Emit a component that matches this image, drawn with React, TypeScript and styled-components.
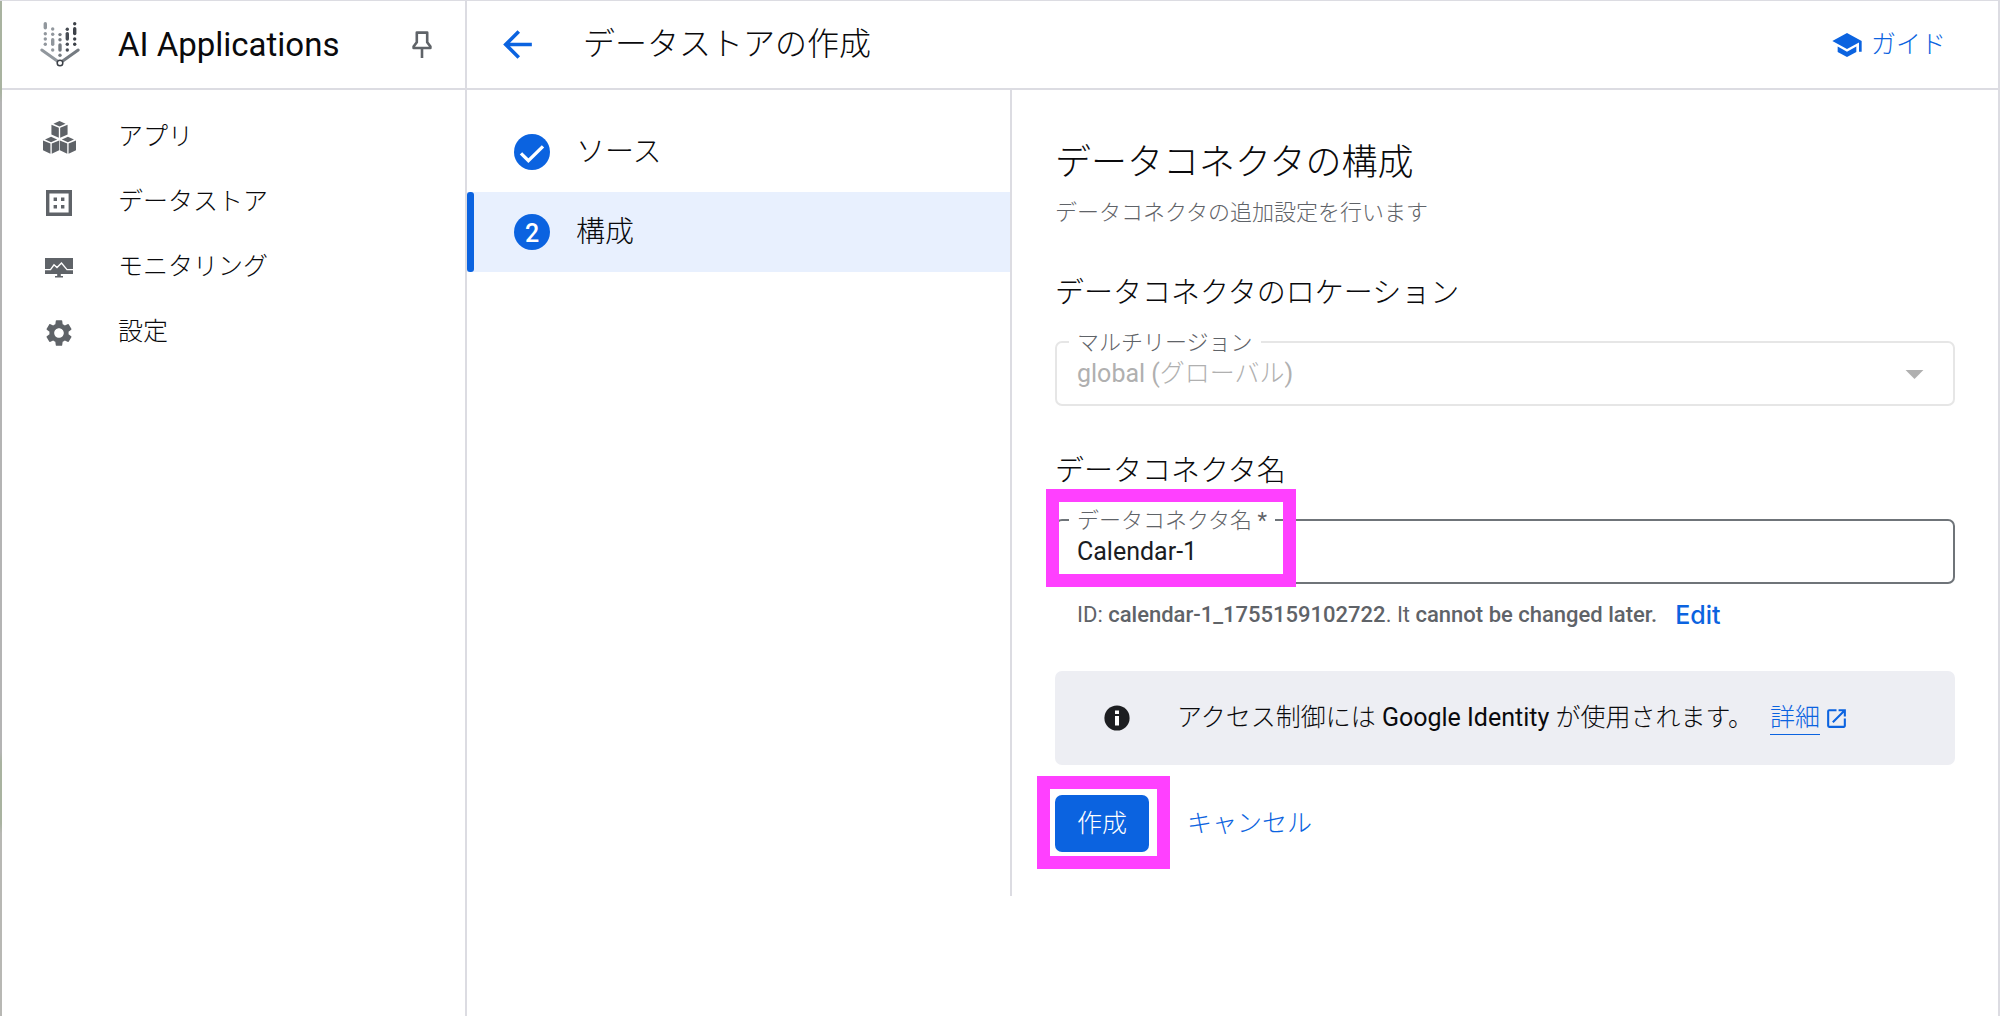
import React from "react";
import styled, { createGlobalStyle } from "styled-components";
import { MdArrowBack, MdArrowDropDown, MdOpenInNew, MdSchool, MdSettings } from "react-icons/md";

const color = {
  line: "#dcdce2",
  text: "#0a0a0c",
  muted: "#5f6368",
  blue: "#0b63e0",
  blueTint: "#e8f0fe",
  mark: "#ff40ff",
};

const GlobalStyle = createGlobalStyle`
  *, *::before, *::after { box-sizing: border-box; }
  body {
    margin: 0;
    background: #fff;
    color: ${color.text};
    font-family: Roboto, "Noto Sans CJK JP Light", "Noto Sans CJK JP", sans-serif;
    font-size: 25px;
    line-height: 32px;
  }
  h1, h2, h3, p, ul, ol { margin: 0; padding: 0; font-weight: 400; }
  ul, ol { list-style: none; }
  button, input, select { font: inherit; margin: 0; }
`;

const Page = styled.div`
  display: flex;
  min-height: 100vh;
  border-top: 1px solid ${color.line};
  border-right: 2px solid ${color.line};
`;

const WindowEdge = styled.div`
  flex: 0 0 2px;
  background: linear-gradient(#a9b3a0 0 9%, #b4b4b4 10% 74%, #a9b3a0 75% 81%, #b8b8b4 82%);
`;

const Sidebar = styled.aside`
  flex: 0 0 465px;
  border-right: 2px solid ${color.line};
`;

const Bar = styled.header`
  display: flex;
  align-items: center;
  height: 89px;
  border-bottom: 2px solid ${color.line};
`;

const BrandBar = styled(Bar)`
  padding: 0 31px 0 38px;
`;

const Brand = styled.span`
  flex: 1;
  margin-left: 38px;
  font-size: 33px;
  line-height: 40px;
`;

const IconButton = styled.button`
  display: grid;
  place-items: center;
  width: 44px;
  height: 44px;
  padding: 0;
  border: 0;
  background: none;
  color: ${color.blue};
`;

const PinButton = styled(IconButton)`
  width: 24px;
  color: ${color.muted};
`;

const NavList = styled.ul`
  padding-top: 15px;
`;

const NavLink = styled.a`
  display: flex;
  align-items: center;
  gap: 39px;
  height: 65px;
  padding-left: 37px;
  color: inherit;
  text-decoration: none;
`;

const NavIcon = styled.span`
  display: grid;
  place-items: center;
  width: 40px;
  color: ${color.muted};
`;

const NavText = styled.span`
  padding-bottom: 2px;
`;

const Main = styled.main`
  flex: 1;
  min-width: 0;
`;

const PageBar = styled(Bar)`
  padding: 0 52px 0 28px;
`;

const PageTitle = styled.h1`
  flex: 1;
  margin-left: 44px;
  padding-bottom: 2px;
  font-size: 32px;
  line-height: 40px;
`;

const GuideLink = styled.a`
  display: flex;
  align-items: center;
  gap: 8px;
  color: ${color.blue};
  text-decoration: none;
`;

const Columns = styled.div`
  display: flex;
`;

const Steps = styled.ol`
  flex: 0 0 545px;
  padding-top: 22px;
  border-right: 2px solid ${color.line};
`;

const Step = styled.li<{ $active?: boolean }>`
  display: flex;
  align-items: center;
  height: 80px;
  font-size: 29px;
  line-height: 40px;
  background: ${(p) => (p.$active ? color.blueTint : "transparent")};
`;

const StepMarker = styled.span<{ $active?: boolean }>`
  align-self: stretch;
  width: 7px;
  margin-right: 40px;
  border-radius: 3px;
  background: ${(p) => (p.$active ? color.blue : "transparent")};
`;

const StepBadge = styled.span`
  display: grid;
  place-items: center;
  width: 36px;
  height: 36px;
  margin-right: 26px;
  border-radius: 50%;
  background: ${color.blue};
  color: #fff;
  font-size: 25px;
  font-weight: 500;
`;

const Form = styled.form`
  flex: 1;
  min-width: 0;
  padding: 49px 43px 44px;
`;

const FormTitle = styled.h2`
  font-size: 36px;
  line-height: 48px;
`;

const FormLead = styled.p`
  margin-top: 10px;
  color: ${color.muted};
  font-size: 22px;
`;

const SectionTitle = styled.h3`
  margin: 44px 0 28px;
  font-size: 29px;
  line-height: 40px;

  ${"div"} + & { margin-top: 45px; }
`;

const Field = styled.div<{ $disabled?: boolean }>`
  position: relative;
  height: 65px;
  border: 2px solid ${(p) => (p.$disabled ? "#e6e6e6" : "#6f7479")};
  border-radius: 7px;
  color: ${(p) => (p.$disabled ? "#b0b0b0" : "#1b1c1f")};
`;

const FieldLabel = styled.label`
  position: absolute;
  left: 12px;
  top: -16px;
  padding: 0 8px;
  background: #fff;
  color: ${color.muted};
  font-size: 22px;
  line-height: 32px;
`;

const controlStyle = `
  display: block;
  width: 100%;
  height: 100%;
  padding: 0 20px;
  border: 0;
  outline: 0;
  background: transparent;
  color: inherit;
  opacity: 1;
  appearance: none;
`;

const Select = styled.select`
  ${controlStyle}
`;

const TextInput = styled.input`
  ${controlStyle}
`;

const SelectArrow = styled(MdArrowDropDown)`
  position: absolute;
  right: 17px;
  top: 9px;
  pointer-events: none;
`;

const Highlight = styled.span`
  position: absolute;
  border: 13px solid ${color.mark};
  pointer-events: none;
`;

const FieldHighlight = styled(Highlight)`
  left: -11px;
  top: -32px;
  width: 250px;
  height: 98px;
`;

const ButtonHighlight = styled(Highlight)`
  inset: -19px -21px -17px -18px;
`;

const Hint = styled.div`
  display: flex;
  align-items: center;
  gap: 18px;
  margin: 15px 22px 0;
  color: ${color.muted};
  font-size: 22px;

  strong { font-weight: 500; }
`;

const TextButton = styled.button`
  padding: 0;
  border: 0;
  background: none;
  color: ${color.blue};
  font-size: 25px;
`;

const EditButton = styled(TextButton)`
  font-family: Inter, Roboto, sans-serif;
  font-weight: 500;
`;

const Notice = styled.div`
  display: flex;
  align-items: center;
  height: 94px;
  margin-top: 40px;
  padding-left: 49px;
  border-radius: 7px;
  background: #edeef3;
`;

const NoticeText = styled.p`
  margin: 0 17px 0 47px;
`;

const DetailLink = styled.a`
  display: flex;
  align-items: center;
  gap: 4px;
  color: ${color.blue};
  text-decoration: none;

  span { border-bottom: 1px solid currentColor; }
`;

const Actions = styled.div`
  display: flex;
  align-items: center;
  gap: 38px;
  margin-top: 30px;
`;

const PrimaryWrap = styled.div`
  position: relative;
`;

const PrimaryButton = styled.button`
  display: block;
  height: 57px;
  padding: 0 22px;
  border: 0;
  border-radius: 7px;
  background: ${color.blue};
  color: #fff;
`;

type Glyph = { x: number; tone: string; dots: number[]; bar: [number, number] };

const logoColumns: Glyph[] = [
  { x: 5.3, tone: "#91979d", dots: [11.7, 17, 22.3], bar: [1.8, 5.8] },
  { x: 12.7, tone: "#91979d", dots: [7, 12.3, 28], bar: [17.7, 22.3] },
  { x: 20, tone: "#757b81", dots: [12.6, 17.7, 33.3], bar: [23, 28] },
  { x: 27.3, tone: "#474c53", dots: [7.3, 22.3, 28], bar: [11.6, 17] },
  { x: 34.7, tone: "#3c4148", dots: [1.8, 17, 22.3], bar: [6.8, 11.6] },
];

const Logo = () => (
  <svg width="40" height="45" viewBox="0 0 40 45" fill="none" strokeLinecap="round" aria-hidden="true">
    {logoColumns.map((c) => (
      <g key={c.x}>
        {c.dots.map((y) => (
          <circle key={y} cx={c.x} cy={y} r="1.7" fill={c.tone} />
        ))}
        <path d={`M${c.x} ${c.bar[0]}V${c.bar[1]}`} stroke={c.tone} strokeWidth="3.4" />
      </g>
    ))}
    <path d="M1.8 28L18 39.4" stroke="#91979d" strokeWidth="3" />
    <path d="M38.2 28L22 39.4" stroke="#757b81" strokeWidth="3" />
    <circle cx="20" cy="41" r="2.8" fill="#fff" stroke="#3c4148" strokeWidth="1.5" />
  </svg>
);

const PinIcon = () => (
  <svg width="20" height="27" viewBox="0 0 20 27" fill="none" stroke="currentColor" strokeWidth="2.6" aria-hidden="true">
    <path d="M4.8 1.6H15.2V11.2L18.4 15.6V17H1.6V15.6L4.8 11.2Z" strokeLinejoin="round" />
    <path d="M10 17V27" />
  </svg>
);

const Cube = ({ x, y }: { x: number; y: number }) => (
  <g transform={`translate(${x} ${y})`}>
    <path d="M24 0L42 8L24 16L6 8Z" />
    <path d="M0 11L22 20V50L0 40Z" />
    <path d="M48 11L26 20V50L48 40Z" />
  </g>
);

const AppsIcon = () => (
  <svg width="33" height="33" viewBox="0 0 98 98" fill="currentColor" aria-hidden="true">
    <Cube x={25} y={0} />
    <Cube x={0} y={47} />
    <Cube x={50} y={47} />
  </svg>
);

const DataStoreIcon = () => (
  <svg width="26" height="26" viewBox="0 0 26 26" fill="currentColor" aria-hidden="true">
    <path fillRule="evenodd" d="M0 0H26V26H0ZM3.4 3.4V22.6H22.6V3.4Z" />
    <path d="M7.6 7.6h3.4v3.4H7.6zM15 7.6h3.4v3.4H15zM7.6 15h3.4v3.4H7.6zM15 15h3.4v3.4H15z" />
  </svg>
);

const MonitoringIcon = () => (
  <svg width="28" height="20" viewBox="0 0 28 20" fill="currentColor" aria-hidden="true">
    <path d="M0 0H28V16H0Z" />
    <path d="M12.2 16H15.8V18H18V19.4H10V18H12.2Z" />
    <path d="M0 11.6H5.5L9 6.8L12 9.6L16.5 5L22 11.6H28" fill="none" stroke="#fff" strokeWidth="1.4" />
  </svg>
);

const InfoIcon = () => (
  <svg width="26" height="26" viewBox="0 0 26 26" aria-hidden="true">
    <circle cx="13" cy="13" r="12.6" fill="#1d1e21" />
    <path d="M11 5.4h4v3.6h-4zM11 11h4v9.6h-4z" fill="#fff" />
  </svg>
);

const CheckIcon = () => (
  <svg width="36" height="36" viewBox="0 0 36 36" fill="none" stroke="#fff" strokeWidth="3.4" aria-label="完了">
    <path d="M7 19.4L14.4 26.6L29 12.4" />
  </svg>
);

const navItems = [
  { label: "アプリ", icon: <AppsIcon /> },
  { label: "データストア", icon: <DataStoreIcon /> },
  { label: "モニタリング", icon: <MonitoringIcon /> },
  { label: "設定", icon: <MdSettings size={32} /> },
];

export default function App() {
  return (
    <>
      <GlobalStyle />
      <Page>
        <WindowEdge />
        <Sidebar>
          <BrandBar>
            <Logo />
            <Brand>AI Applications</Brand>
            <PinButton type="button" aria-label="固定">
              <PinIcon />
            </PinButton>
          </BrandBar>
          <nav>
            <NavList>
              {navItems.map((item) => (
                <li key={item.label}>
                  <NavLink href="#">
                    <NavIcon>{item.icon}</NavIcon>
                    <NavText>{item.label}</NavText>
                  </NavLink>
                </li>
              ))}
            </NavList>
          </nav>
        </Sidebar>
        <Main>
          <PageBar>
            <IconButton type="button" aria-label="戻る">
              <MdArrowBack size={43} />
            </IconButton>
            <PageTitle>データストアの作成</PageTitle>
            <GuideLink href="#">
              <MdSchool size={32} />
              ガイド
            </GuideLink>
          </PageBar>
          <Columns>
            <Steps>
              <Step>
                <StepMarker />
                <StepBadge>
                  <CheckIcon />
                </StepBadge>
                ソース
              </Step>
              <Step $active aria-current="step">
                <StepMarker $active />
                <StepBadge>2</StepBadge>
                構成
              </Step>
            </Steps>
            <Form onSubmit={(e) => e.preventDefault()}>
              <FormTitle>データコネクタの構成</FormTitle>
              <FormLead>データコネクタの追加設定を行います</FormLead>

              <SectionTitle>データコネクタのロケーション</SectionTitle>
              <Field $disabled>
                <FieldLabel htmlFor="region">マルチリージョン</FieldLabel>
                <Select id="region" disabled defaultValue="global">
                  <option value="global">global (グローバル)</option>
                </Select>
                <SelectArrow size={43} />
              </Field>

              <SectionTitle>データコネクタ名</SectionTitle>
              <Field>
                <FieldLabel htmlFor="connector">データコネクタ名 *</FieldLabel>
                <TextInput id="connector" type="text" required defaultValue="Calendar-1" />
                <FieldHighlight />
              </Field>
              <Hint>
                <span>
                  ID: <strong>calendar-1_1755159102722</strong>. It <strong>cannot be changed later.</strong>
                </span>
                <EditButton type="button">Edit</EditButton>
              </Hint>

              <Notice>
                <InfoIcon />
                <NoticeText>アクセス制御には Google Identity が使用されます。</NoticeText>
                <DetailLink href="#">
                  <span>詳細</span>
                  <MdOpenInNew size={25} />
                </DetailLink>
              </Notice>

              <Actions>
                <PrimaryWrap>
                  <PrimaryButton type="submit">作成</PrimaryButton>
                  <ButtonHighlight />
                </PrimaryWrap>
                <TextButton type="button">キャンセル</TextButton>
              </Actions>
            </Form>
          </Columns>
        </Main>
      </Page>
    </>
  );
}
